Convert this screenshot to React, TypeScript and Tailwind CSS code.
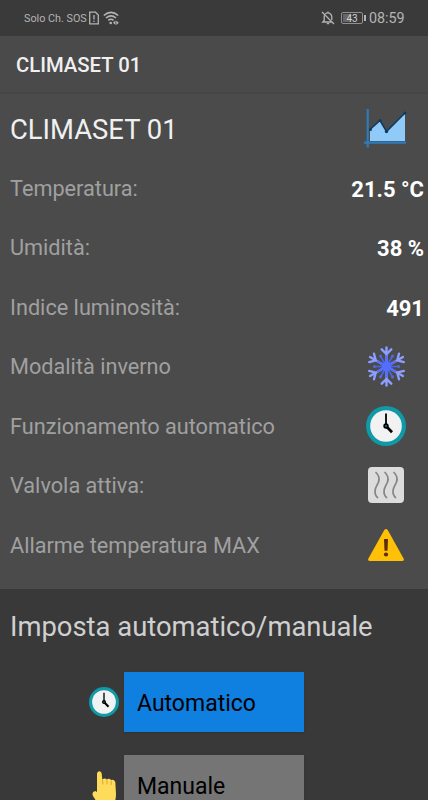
import React from 'react';

const ChartIcon: React.FC = () => (
  <svg className="w-11 h-10" viewBox="0 0 44 40" fill="none">
    <path d="M6 20.5L16 11.5L22.5 22.5L41 4V32H6Z" fill="#90caf9" />
    <path d="M6 20.5L16 11.5L22.5 22.5L41 4" stroke="#0d3c61" strokeWidth="1.5" />
    <g fill="#0d3c61">
      <circle cx="6.5" cy="20.5" r="1.5" />
      <circle cx="16" cy="11.5" r="1.5" />
      <circle cx="22.5" cy="22.5" r="1.7" />
      <circle cx="41" cy="4" r="1.5" />
    </g>
    <path d="M3.7 0V38.5M0 33.7H42" stroke="#2f7ab8" strokeWidth="2.2" />
  </svg>
);

const SnowflakeIcon: React.FC = () => (
  <svg className="w-10 h-10.5" viewBox="-20.5 -21.5 40 42" fill="none" strokeLinecap="round">
    {[0, 60, 120, 180, 240, 300].map((angle) => (
      <g key={angle} transform={`rotate(${angle})`}>
        <path d="M0 -6V-19M-4.8 -17.2L0 -12.4L4.8 -17.2" stroke="#8c9eff" strokeWidth="2.4" />
        <path d="M0 0V-10" stroke="#536dfe" strokeWidth="2.4" />
        <path d="M0 0V-11.5" transform="rotate(30)" stroke="#4a66e8" strokeWidth="1.7" />
        <circle cx="0" cy="-12" r="1.5" transform="rotate(30)" fill="#536dc8" />
      </g>
    ))}
    <circle r="5" fill="#536dfe" />
  </svg>
);

const ClockIcon: React.FC<{ className: string }> = ({ className }) => (
  <svg className={className} viewBox="0 0 40 40" fill="none">
    <circle cx="20" cy="20" r="20" fill="#0e9aa7" />
    <circle cx="20" cy="20" r="15.8" fill="#f2f2f2" />
    <path d="M20 20V7.5" stroke="#000" strokeWidth="1.8" />
    <path d="M20 20L26 26.3" stroke="#000" strokeWidth="2.7" />
    <circle cx="20" cy="20" r="2.7" fill="#000" />
    <circle cx="20" cy="20" r="1" fill="#00897b" />
  </svg>
);

const HeatIcon: React.FC = () => (
  <svg className="w-9 h-9" viewBox="0 0 36 36" fill="none">
    <rect width="36" height="36" rx="4" fill="#dcdcdc" />
    <g stroke="#858585" strokeWidth="1.7" strokeLinecap="round">
      <path d="M8 5.5C10.5 8 12 11 10.5 15C8.5 20 5.5 22 7.5 27.5Q8.2 29.5 9.5 30.5" />
      <path d="M17 5.5C19.5 8 21 11 19.5 15C17.5 20 14.5 22 16.5 27.5Q17.2 29.5 18.5 30.5" />
      <path d="M26 5.5C28.5 8 30 11 28.5 15C26.5 20 23.5 22 25.5 27.5Q26.2 29.5 27.5 30.5" />
    </g>
  </svg>
);

const WarningIcon: React.FC = () => (
  <svg className="w-9 h-8" viewBox="0 0 36 32">
    <path d="M16.3 1.1Q18 -1 19.7 1.1L35.6 29.6Q36.5 32 34 32H2Q-.5 32 .4 29.6Z" fill="#ffc107" />
    <path d="M16 10H20L19.5 21.8H16.5Z" fill="#5d2e08" />
    <circle cx="18" cy="25.5" r="2.1" fill="#5d2e08" />
  </svg>
);

const HandIcon: React.FC = () => (
  <svg className="w-6.5 h-9" viewBox="0 0 26 36" fill="none">
    <path
      d="M5 2.5Q5.5 .3 7.5 .3Q9.500 .5 9.7 2.7L10.3 8.5Q13 6.5 14.7 8.5Q17.5 7 19 9Q22 8 23.3 11L24 23Q24 31 20 36H8L1 25Q-.8 21 3.3 20L5 21Z"
      fill="#ffdb5c"
    />
    <path d="M10.5 9L10.9 13M14.9 9.5L15 13M19.2 10V13.5" stroke="#e3a52c" strokeWidth="1" strokeLinecap="round" />
  </svg>
);

const StatusBar: React.FC = () => (
  <div className="h-9 shrink-0 bg-[#3a3a3a] flex items-center justify-between px-6 text-[#b4b4b4]">
    <div className="flex items-center">
      <span className="w-16 pt-0.5 text-[10.8px] whitespace-nowrap">Solo Ch. SOS</span>
      <svg className="w-2.5 h-3.5 ml-px" viewBox="0 0 10 14" fill="none" stroke="currentColor" strokeWidth="1.3">
        <path d="M.7 1.2H6.5L9.3 4V12.8H.7ZM5 4V8.5M5 9.7V11" />
      </svg>
      <svg className="w-4 h-3.5 ml-1" viewBox="0 0 16 14" fill="none" stroke="currentColor" strokeWidth="1.6">
        <path d="M.8 4.5Q8 -1.8 15.2 4.5M3 7Q8 2.8 13 7M5.3 9.3Q8 7.3 10.5 9.3" />
        <circle cx="7.7" cy="12" r="1.3" fill="currentColor" stroke="none" />
        <path d="M12.5 9.5L10 11.8L12.5 14M13.3 9.5L15.8 11.8L13.3 14Z" fill="currentColor" stroke="none" />
      </svg>
    </div>
    <div className="flex items-center">
      <svg className="w-3.5 h-3.5" viewBox="0 0 14 14" fill="none" stroke="currentColor" strokeWidth="1.3">
        <path d="M1 1L13 13M3.2 4.5V9.5L1.8 11H10.5M4.2 2.8Q7 .8 9.5 3Q10.8 4.2 10.8 6V9M7 .5V2M5.8 12.7H8.2" />
      </svg>
      <div className="relative ml-1.5 w-[22px] h-3 rounded-[2px] border border-[#909090] flex items-center justify-center">
        <div className="absolute left-px top-px bottom-px w-2 bg-[#666]" />
        <span className="relative pt-px text-[10px] leading-none text-[#d0d0d0]">43</span>
      </div>
      <div className="w-0.5 h-1.5 ml-px bg-current" />
      <span className="ml-[3px] pt-0.5 text-[14.3px] w-[35px] whitespace-nowrap">08:59</span>
    </div>
  </div>
);

const readings = [
  { label: 'Temperatura:', value: '21.5 °C' },
  { label: 'Umidità:', value: '38 %' },
  { label: 'Indice luminosità:', value: '491' },
];

const states = [
  { label: 'Modalità inverno', icon: <SnowflakeIcon /> },
  { label: 'Funzionamento automatico', icon: <ClockIcon className="w-10 h-10" /> },
  { label: 'Valvola attiva:', icon: <HeatIcon /> },
  { label: 'Allarme temperatura MAX', icon: <WarningIcon /> },
];

export default function App() {
  return (
    <div className="w-full h-[800px] overflow-hidden flex flex-col bg-[#393939] font-['Roboto',sans-serif]">
      <StatusBar />

      <header className="h-14 shrink-0 bg-[#4a4a4a] px-4 pt-0.5 flex items-center">
        <h1 className="text-[20.3px] font-medium text-[#f0f0f0]">CLIMASET 01</h1>
      </header>

      <main className="h-[497px] shrink-0 bg-[#4b4b4b] border-t-2 border-[#464646] pt-[5px] pl-2.5 pr-1 flex flex-col">
        <div className="h-[59.5px] flex items-center justify-between">
          <h2 className="pt-1 text-[27.4px] text-[#f0f0f0]">CLIMASET 01</h2>
          <div className="w-[77px] flex justify-center">
            <ChartIcon />
          </div>
        </div>
        {readings.map((item) => (
          <div key={item.label} className="h-[59.5px] pt-0.5 flex items-center justify-between">
            <span className="text-[21.7px] text-[#a0a0a0]">{item.label}</span>
            <span className="text-[22px] font-bold text-white">{item.value}</span>
          </div>
        ))}
        {states.map((item) => (
          <div key={item.label} className="h-[59.5px] flex items-center justify-between">
            <span className="pt-0.5 text-[21.7px] text-[#a0a0a0]">{item.label}</span>
            <div className="w-[77px] pb-px flex justify-center">{item.icon}</div>
          </div>
        ))}
      </main>

      <section className="pt-[18px]">
        <h2 className="pl-2.5 text-[27.4px] leading-10 text-[#d0d0d0]">Imposta automatico/manuale</h2>
        <div className="mt-[25px] pl-[89px] flex flex-col gap-[23px]">
          <div className="flex items-center">
            <div className="w-[35px]">
              <ClockIcon className="w-[30px] h-[30px]" />
            </div>
            <button className="w-[180px] h-[60px] pl-[13px] pt-1 bg-[#0f7fe0] text-left text-[23px] text-black shadow-sm">Automatico</button>
          </div>
          <div className="flex items-center">
            <div className="w-[35px] pl-[3px] pt-[7px]">
              <HandIcon />
            </div>
            <button className="w-[180px] h-[60px] pl-[13px] pt-1 bg-[#757575] text-left text-[23px] text-black shadow-sm">Manuale</button>
          </div>
        </div>
      </section>
    </div>
  );
}
